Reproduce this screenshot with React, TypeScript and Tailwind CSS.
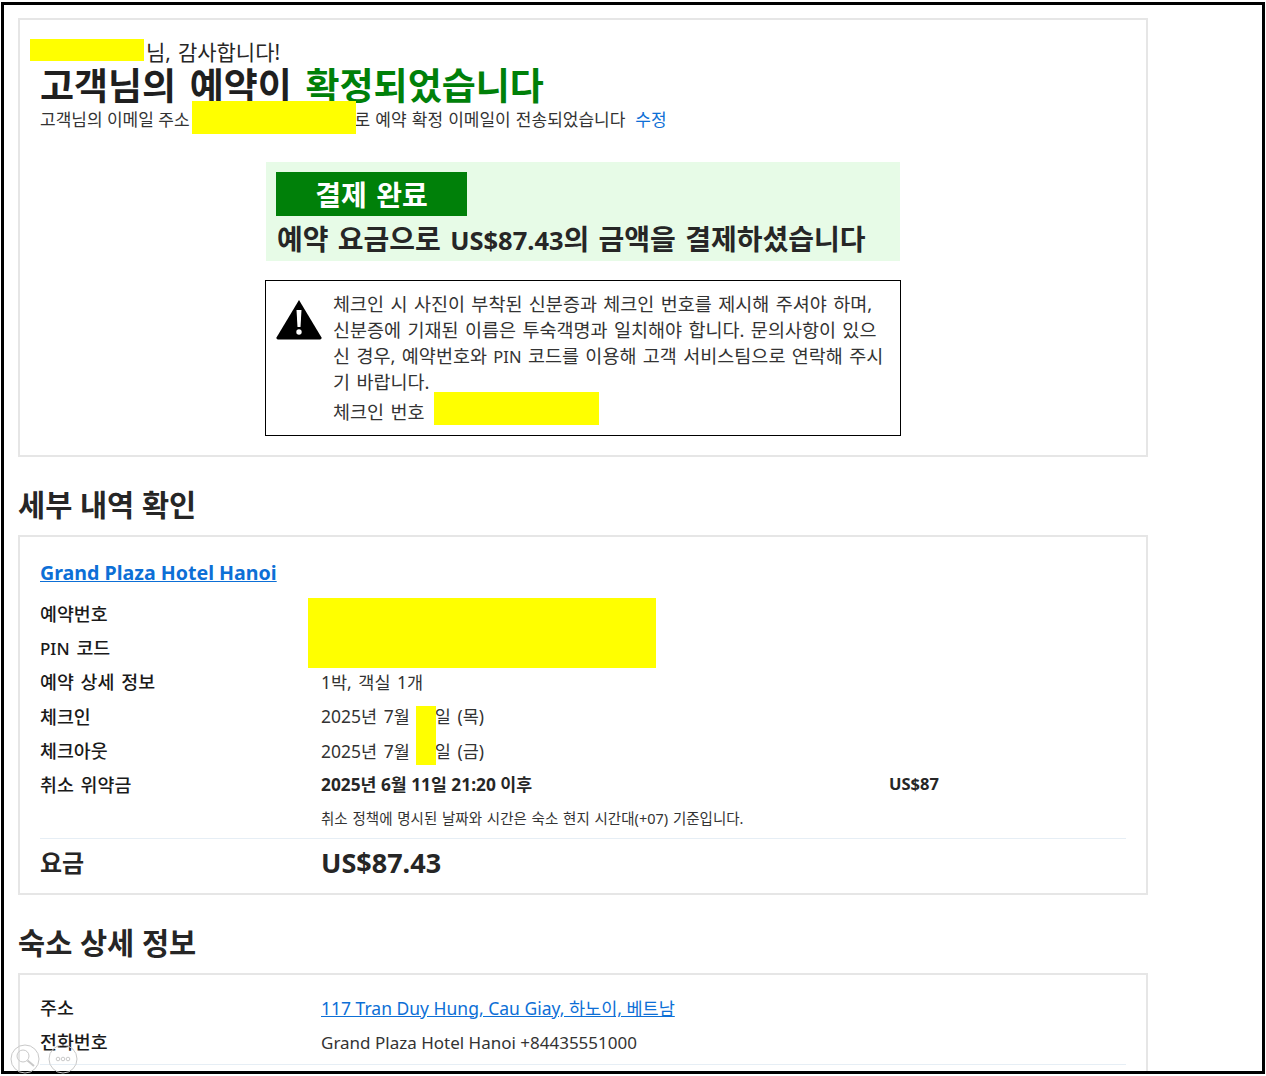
const font = "font-['Noto_Sans','Noto_Sans_CJK_KR',sans-serif]";

const Redact = ({ className }: { className: string }) => (
  <div className={`absolute bg-[#ffff00] ${className}`} />
);

const DetailRow = ({
  label,
  children,
}: {
  label: React.ReactNode;
  children: React.ReactNode;
}) => (
  <div className="flex h-[34.3px] items-center">
    <div className="w-[281px] shrink-0 text-[18.4px] font-medium text-[#1a1a1a] [word-spacing:2px]">
      {label}
    </div>
    <div className="flex-1 text-[17.5px] text-[#333] [word-spacing:2px]">
      {children}
    </div>
  </div>
);

const Card = ({
  className,
  children,
}: {
  className: string;
  children: React.ReactNode;
}) => (
  <div className={`border-2 border-[#e6e6e6] bg-white ${className}`}>
    {children}
  </div>
);

const SectionTitle = ({ text }: { text: string }) => (
  <h2 className="flex h-[78px] items-center pt-[18px] text-[29.5px] font-bold text-[#262626]">
    {text}
  </h2>
);

const WarningIcon = () => (
  <svg viewBox="0 0 46 41" className="h-[41px] w-[46px] shrink-0">
    <path
      d="M23 1 L45.500 38.500 Q46 40.500 44 40.500 L2 40.500 Q0 40.500 .5 38.500 Z"
      fill="#000"
    />
    <path d="M20.500 11 H25.500 L24.500 28 H21.500 Z" fill="#fff" />
    <circle cx="23" cy="33" r="2.700" fill="#fff" />
  </svg>
);

export default function App() {
  return (
    <div
      className={`${font} relative h-[1076px] w-[1266px] overflow-hidden bg-white pl-[1px] pt-[2px]`}
    >
      <div className="h-[1072px] w-[1264px] overflow-hidden border-[3px] border-black pl-[14px] pt-[13px]">
        <div className="w-[1130px]">
          <Card className="relative h-[439px] pl-[20px] pt-[17px]">
            <p className="pl-[106px] text-[21px] leading-[30px] text-[#262626] [word-spacing:1.5px]">
              님, 감사합니다!
            </p>
            <h1 className="text-[37px] font-bold leading-[38px] text-[#1f1f1f] [word-spacing:4px]">
              고객님의 예약이 <span className="text-[#008009]">확정되었습니다</span>
            </h1>
            <p className="mt-[1px] flex h-[28px] items-center whitespace-pre text-[17px] text-[#333]">
              고객님의 이메일 주소
              <span className="w-[165px]" />
              <span className="[word-spacing:.7px]">로 예약 확정 이메일이 전송되었습니다</span>
              <span className="ml-[10px] text-[#0d6fd6]">수정</span>
            </p>
            <div className="ml-[226px] mt-[28px] h-[99px] w-[634px] bg-[#e7fbe7] pl-[10px] pt-[10px]">
              <div className="flex h-[44px] w-[191px] items-center justify-center bg-[#008009] pt-[1px] text-[28px] font-bold text-white [word-spacing:2px]">
                결제 완료
              </div>
              <p className="mt-[4px] whitespace-nowrap pl-[1px] text-[28px] font-bold leading-[38px] text-[#262626] [word-spacing:2px]">
                예약 요금으로 <span className="text-[25.500px]">US$87.43</span>의 금액을 결제하셨습니다
              </p>
            </div>
            <div className="ml-[225px] mt-[19px] flex h-[156px] w-[636px] border border-black pl-[10px] pt-[10px]">
              <div className="mt-[8px] w-[57px] shrink-0">
                <WarningIcon />
              </div>
              <div className="whitespace-nowrap text-[18.500px] leading-[26px] text-[#333] [word-spacing:1.6px]">
                <p className="h-[103px]">
                  체크인 시 사진이 부착된 신분증과 체크인 번호를 제시해 주셔야 하며,
                  <br />
                  신분증에 기재된 이름은 투숙객명과 일치해야 합니다. 문의사항이 있으
                  <br />
                  신 경우, 예약번호와 <span className="text-[16.500px] leading-none">PIN</span> 코드를 이용해 고객 서비스팀으로 연락해 주시
                  <br />기 바랍니다.
                </p>
                <p className="mt-[5px]">체크인 번호</p>
              </div>
            </div>
          </Card>

          <SectionTitle text="세부 내역 확인" />

          <Card className="h-[360px] px-[20px] pt-[21px]">
            <a className="block text-[19.600px] font-bold leading-[30px] text-[#0d6fd6] underline">
              Grand Plaza Hotel Hanoi
            </a>
            <div className="mt-[8.500px]">
              <DetailRow label="예약번호">
                <span />
              </DetailRow>
              <DetailRow
                label={
                  <>
                    <span className="text-[17px]">PIN</span> 코드
                  </>
                }
              >
                <span />
              </DetailRow>
              <DetailRow label="예약 상세 정보">1박, 객실 1개</DetailRow>
              <DetailRow label="체크인">
                2025년 7월<span className="inline-block w-[25px]" />일 (목)
              </DetailRow>
              <DetailRow label="체크아웃">
                2025년 7월<span className="inline-block w-[25px]" />일 (금)
              </DetailRow>
              <DetailRow label="취소 위약금">
                <div className="flex text-[17.300px] font-bold text-[#262626] [word-spacing:0]">
                  <span className="w-[568px]">2025년 6월 11일 21:20 이후</span>
                  <span className="text-[16.500px]">US$87</span>
                </div>
              </DetailRow>
              <div className="flex h-[33px] items-center pl-[281px] pt-[1px] text-[14.500px] text-[#333] [word-spacing:1px]">
                취소 정책에 명시된 날짜와 시간은 숙소 현지 시간대(+07) 기준입니다.
              </div>
            </div>
            <div className="mt-[3px] flex h-[48px] items-center border-t border-[#e6eef5]">
              <div className="w-[281px] text-[24px] font-bold text-[#262626]">
                요금
              </div>
              <div className="text-[27px] font-bold text-[#262626]">US$87.43</div>
            </div>
          </Card>

          <SectionTitle text="숙소 상세 정보" />

          <Card className="h-[120px] px-[20px] pt-[15.500px]">
            <DetailRow label="주소">
              <a className="text-[#0d6fd6] underline [word-spacing:0]">
                117 Tran Duy Hung, Cau Giay, 하노이, 베트남
              </a>
            </DetailRow>
            <DetailRow label="전화번호">
              <span className="text-[17px] [word-spacing:0]">
                Grand Plaza Hotel Hanoi +84435551000
              </span>
            </DetailRow>
            <div className="mt-[5px] border-t border-[#e6eef5]" />
          </Card>
        </div>
      </div>

      {/* 가림 처리 */}
      <Redact className="left-[30px] top-[39px] h-[22px] w-[114px]" />
      <Redact className="left-[192px] top-[101px] h-[33px] w-[164px]" />
      <Redact className="left-[434px] top-[392px] h-[33px] w-[165px]" />
      <Redact className="left-[308px] top-[598px] h-[70px] w-[348px]" />
      <Redact className="left-[416px] top-[706px] h-[59px] w-[20px]" />

      {/* 좌측 하단 뷰어 버튼 */}
      <svg
        viewBox="0 0 70 30"
        className="absolute left-[10px] top-[1044px] h-[30px] w-[70px]"
        fill="none"
        stroke="#c9c9c9"
      >
        <circle cx="15" cy="15" r="14" />
        <circle cx="13" cy="12" r="6" />
        <path d="M17.500 16.500 L24 22" strokeWidth="2" />
        <circle cx="53" cy="15" r="14" />
        <circle cx="48" cy="15" r="1.800" />
        <circle cx="53" cy="15" r="1.800" />
        <circle cx="58" cy="15" r="1.800" />
      </svg>
    </div>
  );
}
